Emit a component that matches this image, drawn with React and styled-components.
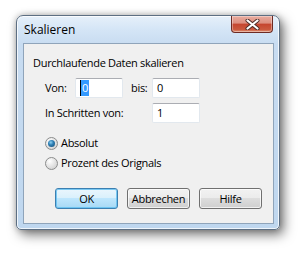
import React from 'react';
import styled, { createGlobalStyle } from 'styled-components';

const Global = createGlobalStyle`
	html, body {
		margin: 0;
		padding: 0;
		background: #ffffff;
	}
	body {
		font-family: "Open Sans", "Liberation Sans", sans-serif;
		font-size: 11px;
		letter-spacing: -0.3px;
		color: #000;
	}
`;

const Page = styled.div`
	width: 308px;
	height: 256px;
	padding: 15px 0 0 16px;
	box-sizing: border-box;
	overflow: hidden;
`;

const Window = styled.div`
	width: 264px;
	height: 215px;
	box-sizing: border-box;
	border: 1px solid #5d6f83;
	border-radius: 7px 7px 5px 5px;
	background: linear-gradient(180deg, #e6f0fa 0px, #d4e5f6 14px, #c8dcf1 28px, #bfd7ef 100%);
	box-shadow: 4px 5px 12px rgba(0, 0, 0, 0.5), 0 0 6px rgba(0, 0, 0, 0.25), inset 0 0 0 1px rgba(255, 255, 255, 0.75);
	display: flex;
	flex-direction: column;
`;

const TitleBar = styled.div`
	height: 27px;
	display: flex;
	align-items: flex-start;
	justify-content: space-between;
	padding-left: 7px;
	padding-right: 6px;
`;

const Title = styled.div`
	font-size: 12px;
	letter-spacing: 0;
	line-height: 16px;
	margin-top: 6px;
	color: #000;
`;

const CloseButton = styled.div`
	width: 42px;
	height: 17px;
	box-sizing: border-box;
	border: 1px solid #6d2a23;
	border-top: none;
	border-radius: 0 0 4px 4px;
	background: linear-gradient(180deg, #e9ac9f 0%, #dc8e7f 45%, #c5452f 50%, #cb5a3f 85%, #e29a7c 100%);
	box-shadow: inset 0 0 0 1px rgba(255, 255, 255, 0.35);
	display: flex;
	align-items: center;
	justify-content: center;
`;

const Panel = styled.div`
	flex: 1;
	margin: 0 5px 5px 6px;
	border: 1px solid #8fa4ba;
	background: #f0f0f0;
	padding: 11px 11px 14px 9px;
	display: flex;
	flex-direction: column;
`;

const Heading = styled.div`
	line-height: 16px;
`;

const Form = styled.div`
	display: grid;
	grid-template-columns: 30px 48px 29px 48px;
	grid-auto-rows: 20px;
	row-gap: 5px;
	margin: 7px 0 0 12px;
	align-items: center;
`;

const Label = styled.div`
	grid-column: ${(p) => p.$span || 'auto'};
	padding-left: ${(p) => p.$pad || 0}px;
	line-height: 16px;
`;

const TextBox = styled.div`
	height: 20px;
	box-sizing: border-box;
	border: 1px solid #e2e8ee;
	border-top-color: #abadb3;
	border-radius: 2px;
	background: #fff;
	padding: 1px 0 0 4px;
	line-height: 16px;
	color: #000;
	grid-column: ${(p) => p.$col || 'auto'};
`;

const Selected = styled.span`
	display: inline-block;
	background: #3399ff;
	color: #fff;
	padding: 0 1px;
	border-left: 1px solid #000;
`;

const Radios = styled.div`
	display: flex;
	flex-direction: column;
	gap: 4px;
	margin: 12px 0 0 12px;
`;

const RadioRow = styled.div`
	display: flex;
	align-items: center;
	gap: 3px;
	height: 16px;
	line-height: 16px;
`;

const RadioDot = styled.span`
	width: 13px;
	height: 13px;
	box-sizing: border-box;
	border-radius: 50%;
	border: 1px solid #8b8c8c;
	background: radial-gradient(circle at 35% 30%, #ffffff 0%, #e6e6e6 45%, #c9c9c9 100%);
	display: flex;
	align-items: center;
	justify-content: center;

	&::after {
		content: '';
		display: ${(p) => (p.$checked ? 'block' : 'none')};
		width: 7px;
		height: 7px;
		border-radius: 50%;
		background: radial-gradient(circle at 40% 35%, #8ed0f0 0%, #2d7fb5 40%, #1b4a6e 100%);
	}
`;

const Buttons = styled.div`
	margin-top: auto;
	display: flex;
	justify-content: flex-end;
	gap: 9px;
`;

const Button = styled.div`
	width: 63px;
	height: 21px;
	box-sizing: border-box;
	border: 1px solid ${(p) => (p.$default ? '#3c7fb1' : '#707070')};
	border-radius: 3px;
	background: ${(p) =>
		p.$default
			? 'linear-gradient(180deg, #eaf6fd 0%, #d9f0fc 49%, #bee6fd 50%, #a7d9f5 100%)'
			: 'linear-gradient(180deg, #f2f2f2 0%, #ebebeb 49%, #dddddd 50%, #cfcfcf 100%)'};
	box-shadow: inset 0 0 0 1px ${(p) => (p.$default ? 'rgba(94, 190, 240, 0.8)' : 'rgba(255, 255, 255, 0.7)')};
	display: flex;
	align-items: center;
	justify-content: center;
	line-height: 16px;
`;

const CloseGlyph = () => (
	<svg width="15" height="11" viewBox="0 0 15 11">
		<path
			d="M2.5 1.5 L12.5 9.5 M12.5 1.5 L2.5 9.5"
			stroke="#4a2a26"
			strokeWidth="4"
			strokeLinecap="round"
		/>
		<path
			d="M2.5 1.5 L12.5 9.5 M12.5 1.5 L2.5 9.5"
			stroke="#ffffff"
			strokeWidth="2.2"
			strokeLinecap="round"
		/>
	</svg>
);

const App = () => (
	<Page>
		<Global />
		<Window>
			<TitleBar>
				<Title>Skalieren</Title>
				<CloseButton>
					<CloseGlyph />
				</CloseButton>
			</TitleBar>
			<Panel>
				<Heading>Durchlaufende Daten skalieren</Heading>
				<Form>
					<Label>Von:</Label>
					<TextBox>
						<Selected>0</Selected>
					</TextBox>
					<Label $pad={8}>bis:</Label>
					<TextBox>0</TextBox>
					<Label $span="1 / 4">In Schritten von:</Label>
					<TextBox $col="4">1</TextBox>
				</Form>
				<Radios>
					<RadioRow>
						<RadioDot $checked />
						Absolut
					</RadioRow>
					<RadioRow>
						<RadioDot />
						Prozent des Orignals
					</RadioRow>
				</Radios>
				<Buttons>
					<Button $default>OK</Button>
					<Button>Abbrechen</Button>
					<Button>Hilfe</Button>
				</Buttons>
			</Panel>
		</Window>
	</Page>
);

export default App;
